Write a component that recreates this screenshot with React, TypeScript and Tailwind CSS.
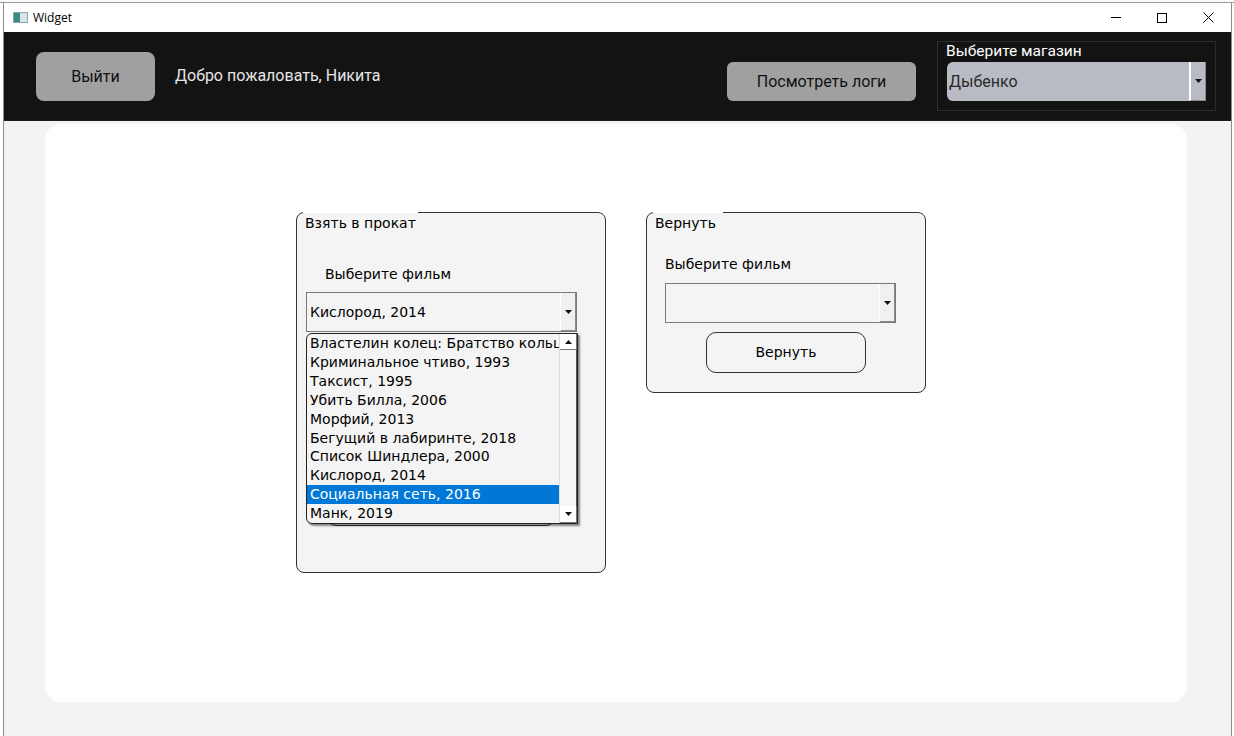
const films = [
    'Властелин колец: Братство кольца, 2001',
    'Криминальное чтиво, 1993',
    'Таксист, 1995',
    'Убить Билла, 2006',
    'Морфий, 2013',
    'Бегущий в лабиринте, 2018',
    'Список Шиндлера, 2000',
    'Кислород, 2014',
    'Социальная сеть, 2016',
    'Манк, 2019',
];

const Arrow = ({ up = false }: { up?: boolean }) => (
    <svg width="7" height="4" viewBox="0 0 7 4" className={up ? 'rotate-180' : ''}>
        <path d="M0 0 H7 L3.5 4 Z" fill="#111" />
    </svg>
);

const Combo = ({ value, width }: { value?: string; width: string }) => (
    <div className={`${width} h-[40px] flex border border-[#7a7a7a] bg-[#f4f4f4]`}>
        <div className="flex-1 flex items-center pl-[3px] text-[14px] text-black truncate">{value}</div>
        <div className="w-[16px] flex items-center justify-center bg-[#f0f0f0] border-l border-white shadow-[inset_-1px_-1px_0_#8a8a8a]">
            <Arrow />
        </div>
    </div>
);

export default function App() {
    return (
        <div className="w-[1234px] h-[736px] flex flex-col bg-white font-['DejaVu_Sans',sans-serif] overflow-hidden">
            <div className="h-[3px] bg-[#fbfbfb] border-b border-[#9a9a9a]" />
            <div className="flex-1 flex">
                <div className="w-[4px] bg-white border-r border-[#8c8c8c]" />
                <div className="flex-1 flex flex-col">
                    {/* title bar */}
                    <div className="h-[29px] flex items-center bg-white font-['Open_Sans',sans-serif] text-[12px] text-black">
                        <div className="ml-[9px] w-[15px] h-[11px] border border-[#8aa] bg-[#d8e4e4] flex">
                            <div className="w-[6px] bg-[#3a8a84]" />
                        </div>
                        <span className="ml-[5px]">Widget</span>
                        <div className="ml-auto flex items-center h-full">
                            <div className="w-[46px] flex justify-center"><div className="w-[10px] h-px bg-black" /></div>
                            <div className="w-[46px] flex justify-center"><div className="w-[10px] h-[10px] border border-black" /></div>
                            <div className="w-[46px] flex justify-center">
                                <svg width="11" height="11" viewBox="0 0 11 11">
                                    <path d="M0.5 0.5 L10.5 10.5 M10.5 0.5 L0.5 10.5" stroke="#000" strokeWidth="1" />
                                </svg>
                            </div>
                        </div>
                    </div>

                    {/* header */}
                    <div className="h-[89px] bg-[#131313] border-b border-[#181a24] flex items-start font-['Roboto',sans-serif]">
                        <button className="ml-[32px] mt-[20px] w-[119px] h-[49px] rounded-[8px] bg-[#a0a0a0] text-[16px] text-[#111]">
                            Выйти
                        </button>
                        <span className="ml-[20px] mt-[34px] text-[16px] leading-[20px] text-[#e6e6e6]">Добро пожаловать, Никита</span>
                        <button className="ml-auto mt-[30px] w-[189px] h-[39px] rounded-[6px] bg-[#a0a0a0] text-[16px] text-[#111]">
                            Посмотреть логи
                        </button>
                        <div className="ml-[21px] mr-[15px] mt-[9px] w-[279px] h-[70px] border border-[#2e2e2e] px-[9px] relative">
                            <span className="absolute left-[8px] top-[-1px] text-[15.5px] leading-[20px] text-white">Выберите магазин</span>
                            <div className="mt-[20px] h-[39px] flex rounded-l-[6px] bg-[#b8bbc4]">
                                <div className="flex-1 flex items-center pl-[2px] text-[16px] text-[#2a2a2a]">Дыбенко</div>
                                <div className="w-[17px] flex items-center justify-center border-l-2 border-white border-r border-b border-r-[#888] border-b-[#888]">
                                    <Arrow />
                                </div>
                            </div>
                        </div>
                    </div>

                    {/* body */}
                    <div className="flex-1 bg-[#f3f3f3] pt-[3px] pl-[41px] pr-[44px] pb-[34px]">
                        <div className="h-full bg-white rounded-[16px] pt-[88px] pl-[251px] flex items-start gap-[40px] text-[14px] text-black">
                            {/* rent group */}
                            <div className="relative w-[310px] h-[361px] border border-[#333] rounded-[8px] bg-[#f4f4f4]">
                                <div className="absolute left-[6px] top-[-1px] w-[115px] h-px bg-white" />
                                <div className="pl-[8px] pt-[1px] leading-[18px]">Взять в прокат</div>
                                <div className="pl-[28px] mt-[33px] leading-[18px]">Выберите фильм</div>
                                <div className="pl-[9px] mt-[9px]">
                                    <Combo value="Кислород, 2014" width="w-[271px]" />
                                </div>
                                <div className="ml-[29px] mt-[170px] w-[230px] h-[24px] border border-[#333] rounded-[10px]" />

                                {/* open dropdown */}
                                <div className="absolute left-[9px] top-[120px] w-[272px] h-[191px] flex bg-[#f4f4f4] border border-[#222] rounded-l-[6px] shadow-[2px_2px_2px_rgba(0,0,0,0.45)]">
                                    <div className="flex-1 min-w-0 flex flex-col">
                                        {films.map((f, i) => (
                                            <div
                                                key={f}
                                                className={i === 8
                                                    ? 'h-[19px] leading-[19px] pl-[3px] whitespace-nowrap overflow-hidden bg-[#0078d7] text-white'
                                                    : 'h-[19px] leading-[19px] pl-[3px] whitespace-nowrap overflow-hidden'}
                                            >
                                                {f}
                                            </div>
                                        ))}
                                    </div>
                                    <div className="w-[18px] flex flex-col bg-[#f0f0f0] border-l border-[#ddd]">
                                        <div className="h-[16px] flex items-center justify-center bg-white border-r border-b border-[#777]">
                                            <Arrow up />
                                        </div>
                                        <div className="flex-1 border-r border-[#555] bg-[#f6f6f6]" />
                                        <div className="h-[17px] flex items-center justify-center bg-white border-r border-b border-[#777]">
                                            <Arrow />
                                        </div>
                                    </div>
                                </div>
                            </div>

                            {/* return group */}
                            <div className="relative w-[280px] h-[181px] border border-[#333] rounded-[8px] bg-[#f4f4f4]">
                                <div className="absolute left-[6px] top-[-1px] w-[70px] h-px bg-white" />
                                <div className="pl-[8px] pt-[1px] leading-[18px]">Вернуть</div>
                                <div className="pl-[18px] mt-[23px] leading-[18px]">Выберите фильм</div>
                                <div className="pl-[18px] mt-[10px]">
                                    <Combo width="w-[231px]" />
                                </div>
                                <div className="pl-[59px] mt-[9px]">
                                    <button className="w-[160px] h-[41px] border border-[#333] rounded-[10px] bg-[#f4f4f4] text-[14px]">
                                        Вернуть
                                    </button>
                                </div>
                            </div>
                        </div>
                    </div>
                </div>
                <div className="w-[3px] bg-white border-l border-[#8c8c8c]" />
            </div>
        </div>
    );
}
